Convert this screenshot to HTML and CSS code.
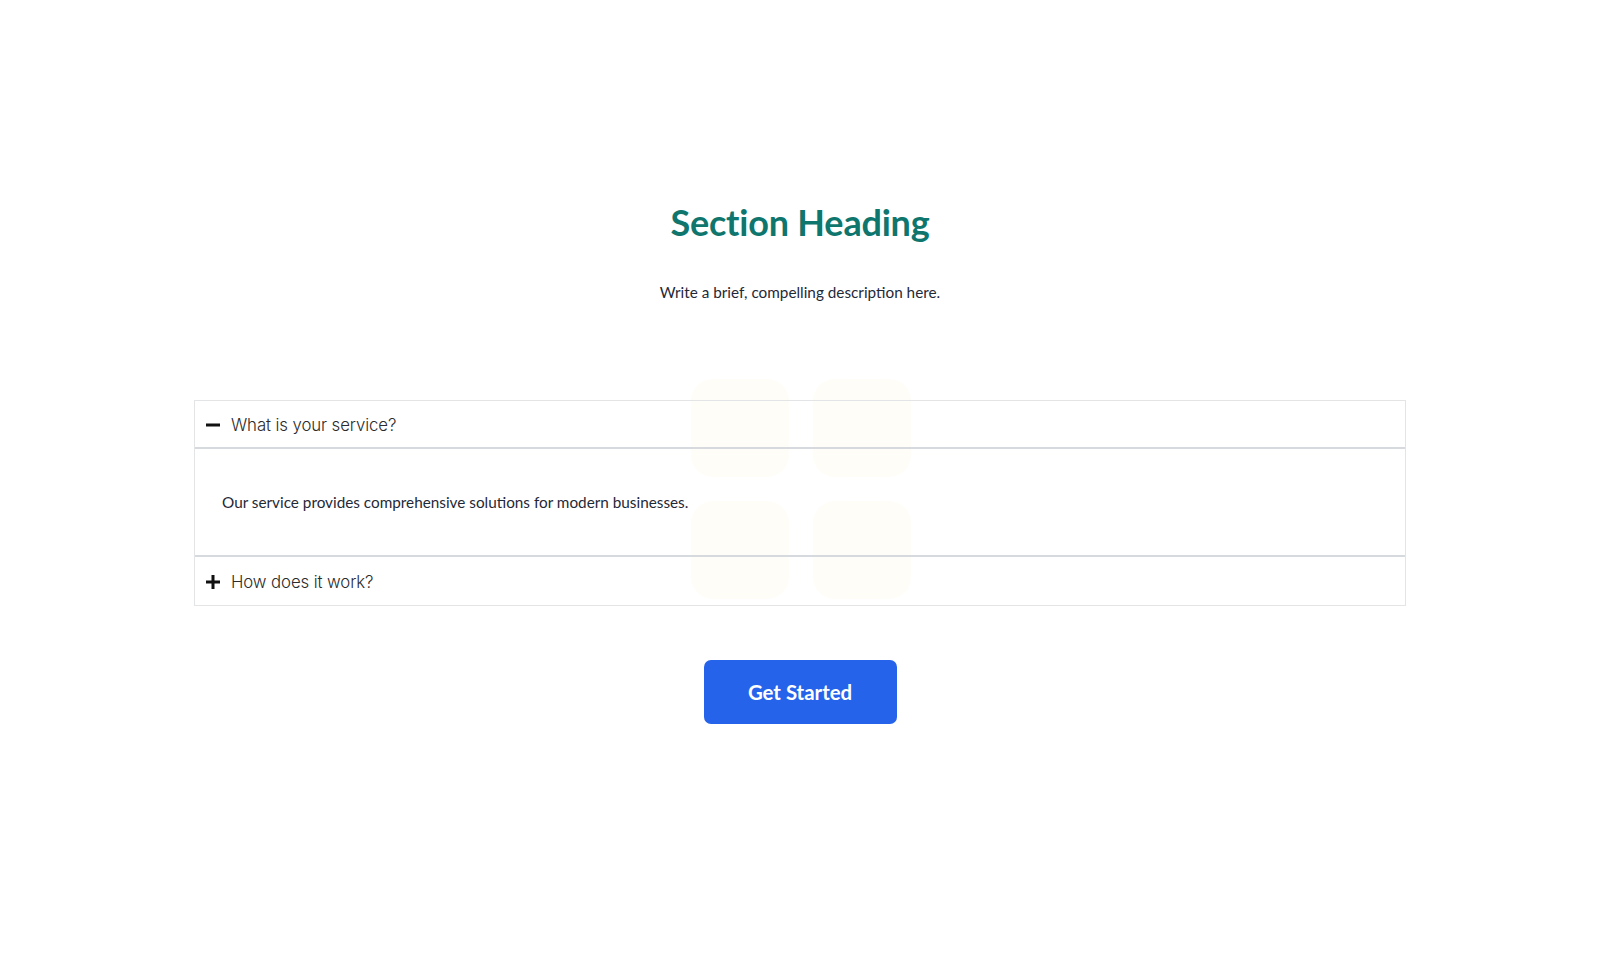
FILE: index.html
```html
<!DOCTYPE html>
<html lang="en">
<head>
<meta charset="utf-8">
<title>Section</title>
<link rel="stylesheet" href="styles.css">
</head>
<body>
<main class="page">
  <section class="section">
    <h1 class="heading">Section Heading</h1>
    <p class="lead">Write a brief, compelling description here.</p>
    <div class="faq">
      <div class="deco" aria-hidden="true">
        <span></span><span></span><span></span><span></span>
      </div>
      <div class="accordion">
        <div class="acc-head">
          <svg class="acc-icon" viewBox="0 0 14 14" width="14" height="14"><rect x="0" y="5.5" width="14" height="3" fill="#111"/></svg>
          <span class="acc-title">What is your service?</span>
        </div>
        <div class="acc-body">
          <p>Our service provides comprehensive solutions for modern businesses.</p>
        </div>
        <div class="acc-head last">
          <svg class="acc-icon" viewBox="0 0 14 14" width="14" height="14"><rect x="0" y="5.5" width="14" height="3" fill="#111"/><rect x="5.5" y="0" width="3" height="14" fill="#111"/></svg>
          <span class="acc-title">How does it work?</span>
        </div>
      </div>
    </div>
    <a class="cta" href="#">Get Started</a>
  </section>
</main>
</body>
</html>
```

FILE: styles.css
```css
* { box-sizing: border-box; }
html, body { margin: 0; padding: 0; background: #fff; }
body { font-family: "Lato", "Open Sans", sans-serif; color: #1f2937; }
.page { width: 100%; }
.section {
  display: flex;
  flex-direction: column;
  align-items: center;
  padding-top: 200px;
}
.heading {
  margin: 0;
  font-size: 36px;
  line-height: 44px;
  font-weight: 700;
  color: #0f766e;
  letter-spacing: -0.2px;
}
.lead {
  margin: 37px 0 0;
  font-size: 15.3px;
  line-height: 22px;
  color: #1f2937;
}
.faq {
  position: relative;
  width: 1212px;
  margin-top: 97px;
}
.deco {
  position: absolute;
  left: 497px;
  top: -21px;
  display: grid;
  grid-template-columns: 98px 98px;
  grid-auto-rows: 98px;
  gap: 24px;
  z-index: 0;
}
.deco span {
  background: #fefdf8;
  border-radius: 22px;
}
.accordion {
  position: relative;
  z-index: 1;
  border: 1px solid #e3e4e6;
}
.acc-head {
  display: flex;
  align-items: center;
  gap: 11px;
  height: 48px;
  padding: 1px 11px 0;
  border-bottom: 2px solid #d6d9de;
}
.acc-head.last { border-bottom: 0; height: 48px; }
.acc-icon { flex: none; }
.acc-title {
  font-family: "Inter", "Roboto", sans-serif;
  font-weight: 300;
  font-size: 16.8px;
  letter-spacing: -0.1px;
  color: #2b2b2b;
}
.acc-body {
  height: 108px;
  display: flex;
  align-items: center;
  padding: 0 27px;
  border-bottom: 2px solid #d6d9de;
}
.acc-body p {
  margin: 0;
  font-size: 15.3px;
  color: #1f2937;
}
.cta {
  margin-top: 54px;
  display: flex;
  align-items: center;
  justify-content: center;
  width: 193px;
  height: 64px;
  background: #2563eb;
  border-radius: 7px;
  color: #fff;
  font-size: 20.4px;
  font-weight: 700;
  text-decoration: none;
}
```
